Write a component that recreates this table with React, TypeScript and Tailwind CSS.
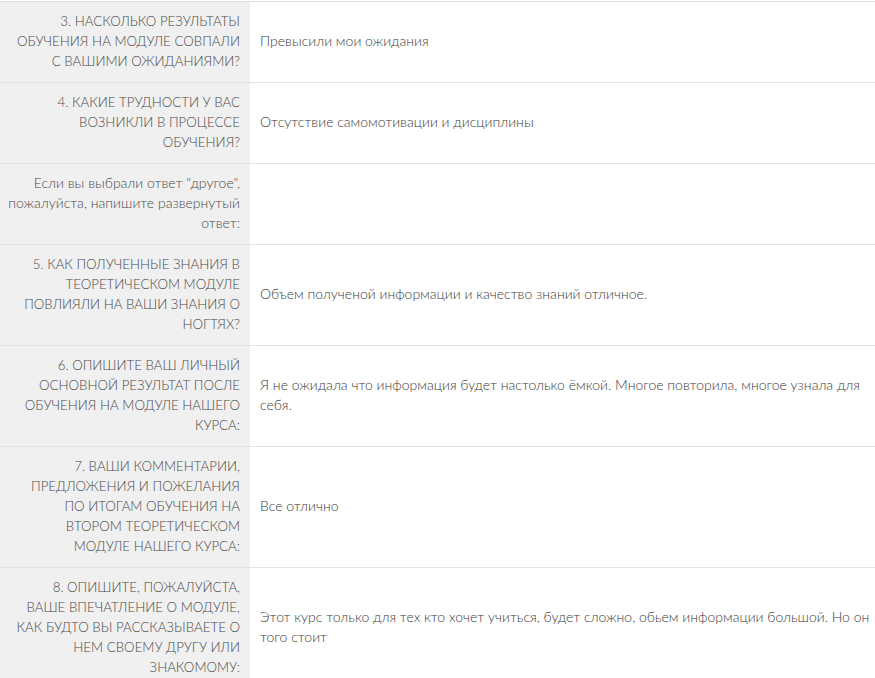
import React from "react";

const rows: { q: string[]; lower?: boolean; a: string[] }[] = [
  { q: ["3. НАСКОЛЬКО РЕЗУЛЬТАТЫ", "ОБУЧЕНИЯ НА МОДУЛЕ СОВПАЛИ", "С ВАШИМИ ОЖИДАНИЯМИ?"], a: ["Превысили мои ожидания"] },
  { q: ["4. КАКИЕ ТРУДНОСТИ У ВАС", "ВОЗНИКЛИ В ПРОЦЕССЕ", "ОБУЧЕНИЯ?"], a: ["Отсутствие самомотивации и дисциплины"] },
  { q: ["Если вы выбрали ответ \"другое\",", "пожалуйста, напишите развернутый", "ответ:"], lower: true, a: [] },
  { q: ["5. КАК ПОЛУЧЕННЫЕ ЗНАНИЯ В", "ТЕОРЕТИЧЕСКОМ МОДУЛЕ", "ПОВЛИЯЛИ НА ВАШИ ЗНАНИЯ О", "НОГТЯХ?"], a: ["Объем полученой информации и качество знаний отличное."] },
  { q: ["6. ОПИШИТЕ ВАШ ЛИЧНЫЙ", "ОСНОВНОЙ РЕЗУЛЬТАТ ПОСЛЕ", "ОБУЧЕНИЯ НА МОДУЛЕ НАШЕГО", "КУРСА:"], a: ["Я не ожидала что информация будет настолько ёмкой. Многое повторила, многое узнала для", "себя."] },
  { q: ["7. ВАШИ КОММЕНТАРИИ,", "ПРЕДЛОЖЕНИЯ И ПОЖЕЛАНИЯ", "ПО ИТОГАМ ОБУЧЕНИЯ НА", "ВТОРОМ ТЕОРЕТИЧЕСКОМ", "МОДУЛЕ НАШЕГО КУРСА:"], a: ["Все отлично"] },
  { q: ["8. ОПИШИТЕ, ПОЖАЛУЙСТА,", "ВАШЕ ВПЕЧАТЛЕНИЕ О МОДУЛЕ,", "КАК БУДТО ВЫ РАССКАЗЫВАЕТЕ О", "НЕМ СВОЕМУ ДРУГУ ИЛИ", "ЗНАКОМОМУ:"], a: ["Этот курс только для тех кто хочет учиться, будет сложно, обьем информации большой. Но он", "того стоит"] },
];

export default function App() {
  return (
    <div className="w-[875px] bg-white pt-px" style={{ fontFamily: "Lato, 'Open Sans', sans-serif" }}>
      <div className="border-t border-[#e2e2e2]">
        {rows.map((r, i) => (
          <div key={i} className="flex border-b border-[#e2e2e2]">
            <div
              className={
                r.lower
                  ? "w-[250px] shrink-0 bg-[#f0f0f0] pt-[9px] pb-[11px] pl-[8px] pr-[10px] text-right text-[14px] font-light leading-[20px] text-[#4a4a4a]"
                  : "w-[250px] shrink-0 bg-[#f0f0f0] pt-[9px] pb-[11px] pl-[8px] pr-[10px] text-right text-[13.3px] font-light leading-[20px] text-[#4a4a4a]"
              }
            >
              {r.q.map((l, j) => (
                <div key={j} className="whitespace-nowrap">{l}</div>
              ))}
            </div>
            <div className="flex flex-1 items-center pt-[9px] pb-[11px] pl-[10px] pr-[10px] text-[14px] font-light leading-[20px] text-[#3c3c3c]">
              <div>
                {r.a.map((l, j) => (
                  <div key={j} className="whitespace-nowrap">{l}</div>
                ))}
              </div>
            </div>
          </div>
        ))}
      </div>
    </div>
  );
}
